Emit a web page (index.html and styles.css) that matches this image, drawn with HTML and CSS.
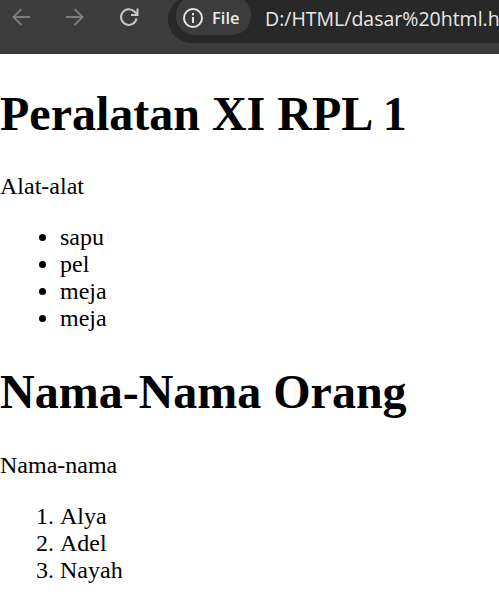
FILE: index.html
```html
<!DOCTYPE html>
<html lang="en">
  <head>
    <meta charset="utf-8">
    <title>Peralatan XI RPL 1</title>
    <link rel="stylesheet" href="styles.css">
  </head>
  <body>
    <div class="toolbar">
      <div class="nav">
        <svg class="nav-icon" viewBox="0 0 20 20"><path d="M19 10H2.500M10.500 2l-8 8 8 8" fill="none" stroke="#7b7b7b" stroke-width="2"/></svg>
        <svg class="nav-icon" viewBox="0 0 20 20"><path d="M1 10h16.500M9.500 2l8 8-8 8" fill="none" stroke="#7b7b7b" stroke-width="2"/></svg>
        <svg class="nav-icon" viewBox="0 0 20 20"><path d="M17.500 11.500A7.800 7.800 0 1 1 15.300 4.500L18 7M18.500 1.500v6.500h-6.500" fill="none" stroke="#c7c7c7" stroke-width="2"/></svg>
      </div>
      <div class="omnibox">
        <div class="chip">
          <svg class="info-icon" viewBox="0 0 20 20"><circle cx="10" cy="10" r="9" fill="none" stroke="#e3e3e3" stroke-width="2"/><path d="M10 9v6M10 5v2.200" fill="none" stroke="#e3e3e3" stroke-width="2"/></svg>
          <span class="chip-label">File</span>
        </div>
        <span class="url">D:/HTML/dasar%20html.html</span>
      </div>
    </div>
    <main class="doc">
      <h1>Peralatan XI RPL 1</h1>
      <p>Alat-alat</p>
      <ul>
        <li>sapu</li>
        <li>pel</li>
        <li>meja</li>
        <li>meja</li>
      </ul>
      <h1>Nama-Nama Orang</h1>
      <p>Nama-nama</p>
      <ol>
        <li>Alya</li>
        <li>Adel</li>
        <li>Nayah</li>
      </ol>
    </main>
  </body>
</html>
```

FILE: styles.css
```css
html, body {
  margin: 0;
  padding: 0;
  height: 100%;
  overflow: hidden;
  background: #fff;
}
.toolbar {
  display: flex;
  align-items: flex-start;
  height: 54px;
  background: #3c3c3c;
  overflow: hidden;
}
.nav {
  display: flex;
  gap: 34px;
  padding: 7px 0 0 11px;
  width: 168px;
  box-sizing: border-box;
  flex-shrink: 0;
}
.nav-icon {
  width: 20px;
  height: 20px;
}
.omnibox {
  display: flex;
  align-items: center;
  flex-shrink: 0;
  gap: 14px;
  width: 600px;
  height: 47px;
  margin-top: -4px;
  padding: 0 0 8px 8px;
  box-sizing: border-box;
  border-radius: 24px;
  background: #282828;
}
.chip {
  display: flex;
  align-items: center;
  gap: 9px;
  width: 75px;
  height: 39px;
  padding: 4px 0 0 7px;
  box-sizing: border-box;
  border-radius: 19px;
  background: #3c3c3c;
}
.info-icon {
  width: 20px;
  height: 20px;
}
.chip-label {
  font-family: "Open Sans", "Liberation Sans", sans-serif;
  font-size: 16.500px;
  font-weight: 600;
  color: #eaeaea;
}
.url {
  padding-top: 5px;
  font-family: "Open Sans", "Liberation Sans", sans-serif;
  font-size: 19.500px;
  color: #e8e8e8;
  white-space: nowrap;
}
.doc {
  font-family: "Liberation Serif", serif;
  font-size: 24px;
  line-height: 27px;
  color: #000;
}
h1 {
  font-size: 2em;
  line-height: 55px;
  margin: 0.67em 0;
}
p {
  margin: 1em 0;
}
ul, ol {
  margin: 1em 0;
  padding-left: 60px;
}
```
